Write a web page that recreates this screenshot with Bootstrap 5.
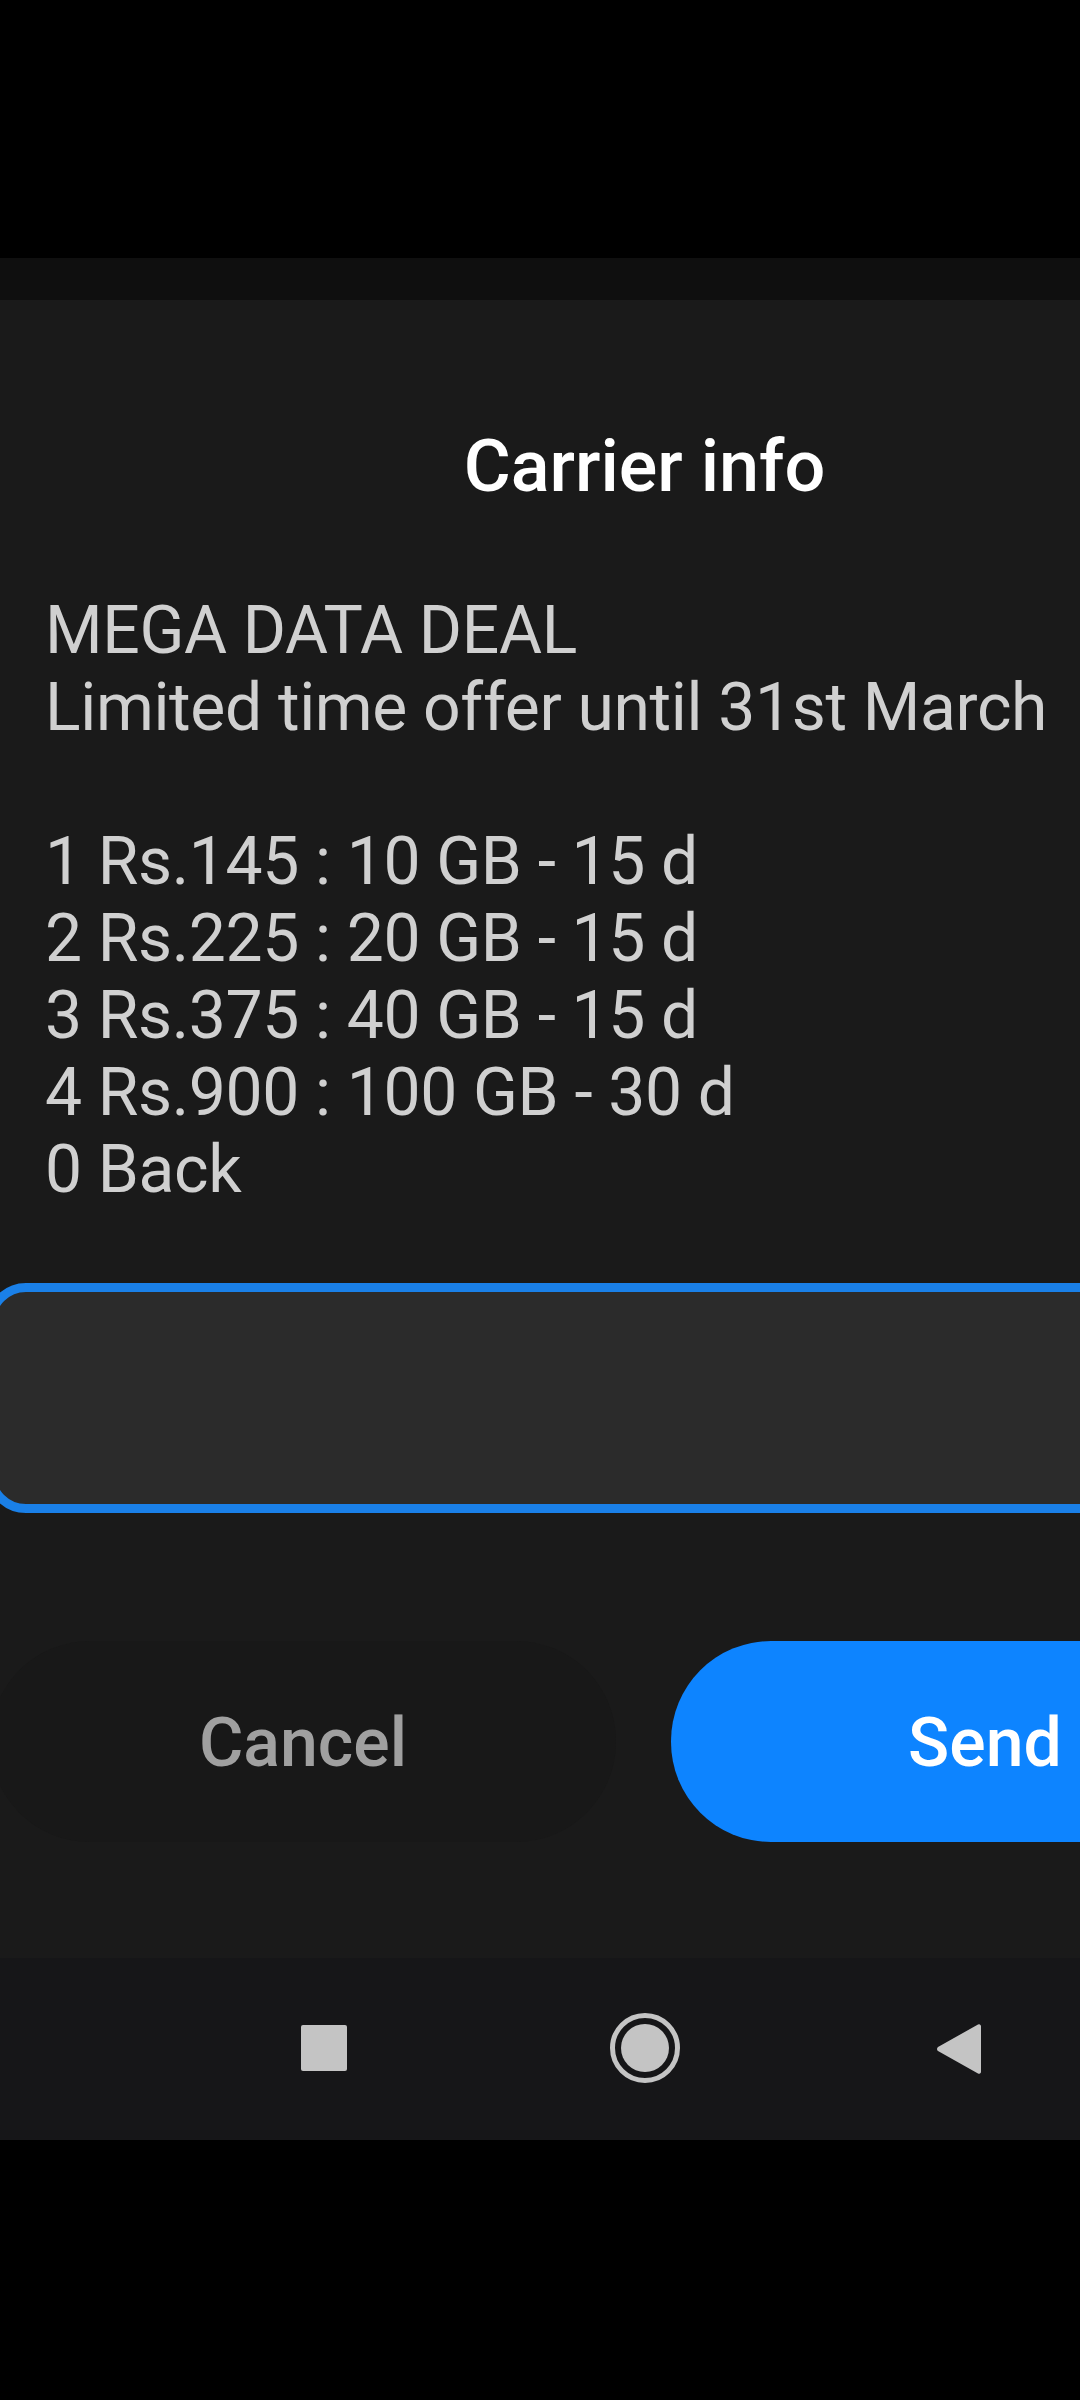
<!DOCTYPE html>
<html lang="en">
<head>
<meta charset="utf-8">
<title>Carrier info</title>
<link href="https://cdn.jsdelivr.net/npm/bootstrap@5.3.0/dist/css/bootstrap.min.css" rel="stylesheet">
<style>
html,body{background:#000;overflow-x:hidden;}
body{font-family:Roboto,"Liberation Sans",sans-serif;width:1080px;height:2400px;}
.top-gap{height:258px;background:#000;}
.dim-band{height:42px;background:#0f0f0f;}
.dlg{height:1658px;background:#1a1a1a;padding-top:117px;}
.dlg-title{margin:0;width:1289px;text-align:center;font-size:72px;line-height:100px;font-weight:500;color:#fff;}
.ussd-text{margin:75px 0 0 45px;font-size:66px;letter-spacing:-.35px;line-height:77px;color:#d0d0d0;white-space:pre-line;}
.ussd-input{display:block;margin:75px 0 0 -14px;width:1320px;max-width:none;height:230px;background:#2b2b2b;border:9px solid #1a80e8;border-radius:40px;box-shadow:none;}
.ussd-input:focus{background:#2b2b2b;border-color:#1a80e8;box-shadow:none;}
.act-row{margin:128px 0 0 -10px;width:1320px;gap:55px;}
.act-btn{flex:0 0 auto;height:201px;border:0;border-radius:100px;font-size:68px;font-weight:500;padding:3px 0 0;line-height:1;}
.act-cancel{width:626px;background:#181818;color:#a0a0a0;}
.act-send{width:628px;background:#0d84ff;color:#fff;}
.navrow{height:182px;background:#161618;padding:67px 0 0 301px;}
.ic-gap1{margin-left:263px;}
.ic-gap2{margin-left:257px;}
.ic-sq{width:46px;height:46px;}
.ic-ho{width:70px;height:70px;margin-top:-12px;}
.ic-bk{width:44px;height:52px;margin-top:-2px;}
.foot{height:260px;background:#000;}
</style>
</head>
<body>
<div class="top-gap"></div>
<div class="dim-band"></div>
<div class="dlg">
  <h1 class="dlg-title">Carrier info</h1>
  <div class="ussd-text">MEGA DATA DEAL
Limited time offer until 31st March

1 Rs.145 : 10 GB - 15 d
2 Rs.225 : 20 GB - 15 d
3 Rs.375 : 40 GB - 15 d
4 Rs.900 : 100 GB - 30 d
0 Back</div>
  <input class="form-control ussd-input" type="text" aria-label="Reply">
  <div class="d-flex act-row">
    <button type="button" class="btn act-btn act-cancel">Cancel</button>
    <button type="button" class="btn act-btn act-send">Send</button>
  </div>
</div>
<div class="d-flex align-items-start navrow">
  <svg class="ic-sq" viewBox="0 0 46 46"><rect width="46" height="46" rx="2" fill="#c4c4c4"/></svg>
  <svg class="ic-ho ic-gap1" viewBox="0 0 70 70"><circle cx="35" cy="35" r="32.5" fill="none" stroke="#c4c4c4" stroke-width="5"/><circle cx="35" cy="35" r="24" fill="#c4c4c4"/></svg>
  <svg class="ic-bk ic-gap2" viewBox="0 0 44 52"><path d="M41 1.5a2 2 0 0 1 3 1.5v46a2 2 0 0 1-3 1.5L1 28a2.500 2.500 0 0 1 0-4z" fill="#c4c4c4"/></svg>
</div>
<div class="foot"></div>
<script src="https://cdn.jsdelivr.net/npm/bootstrap@5.3.0/dist/js/bootstrap.bundle.min.js"></script>
</body>
</html>
